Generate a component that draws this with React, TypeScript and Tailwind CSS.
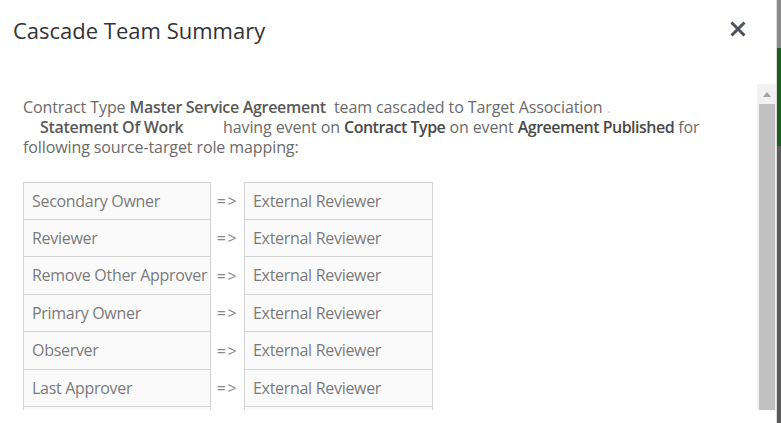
import React from "react";

const rows = [
  "Secondary Owner",
  "Reviewer",
  "Remove Other Approver",
  "Primary Owner",
  "Observer",
  "Last Approver",
  "",
];

const FONT = { fontFamily: '"Open Sans", "Noto Sans", sans-serif' };

function CloseIcon() {
  return (
    <svg width="16" height="16" viewBox="0 0 16 16" className="block">
      <path d="M1.5 1.5 L14.5 14.5 M14.5 1.5 L1.5 14.5" stroke="#4d5159" strokeWidth="3" />
    </svg>
  );
}

function Scrollbar() {
  return (
    <div className="w-[19px] flex flex-col bg-[#f1f1f1] pl-[2px] pr-[1px]">
      <div className="h-[20px] flex items-center justify-center">
        <svg width="8" height="5" viewBox="0 0 8 5" className="block">
          <path d="M0 5 L4 0 L8 5 Z" fill="#a3a3a3" />
        </svg>
      </div>
      <div className="flex-1 bg-[#c1c1c1]" />
    </div>
  );
}

export default function App() {
  return (
    <div className="w-[781px] h-[423px] flex overflow-hidden bg-white" style={FONT}>
      <div className="w-[777px] flex flex-col border-r border-[#dcdcdc]">
        <div className="h-[84px] flex items-start justify-between pl-[13px] pr-[30px] pt-[15px]">
          <h1 className="text-[22px] leading-[30px] text-[#333]">Cascade Team Summary</h1>
          <div className="pt-[6px]">
            <CloseIcon />
          </div>
        </div>

        <div className="h-[326px] flex">
          <div className="flex-1 overflow-hidden pl-[23px] pt-[13px]">
            <div className="text-[16px] leading-[20px] text-[#6b6b6b] tracking-[-0.1px] whitespace-nowrap">
              <div>
                Contract Type{" "}
                <b className="font-semibold text-[#595959] tracking-[-0.3px]">Master Service Agreement</b>
                {"\u00a0\u00a0"}team cascaded to Target Association <span className="text-[#d6d6d6]">.</span>
              </div>
              <div>
                <span className="inline-block w-[200px] pl-[17px]">
                  <b className="font-semibold text-[#595959] tracking-[-0.3px]">Statement Of Work</b>
                </span>
                having event on{" "}
                <span className="font-semibold text-[#4a4a4a] tracking-[-0.5px]">Contract Type</span> on event{" "}
                <span className="font-semibold text-[#4a4a4a] tracking-[-0.5px]">Agreement Published</span> for
              </div>
              <div>following source-target role mapping:</div>
            </div>

            <div className="mt-[25px] flex flex-col">
              {rows.map((r, i) => (
                <div key={i} className="flex h-[37.5px] text-[16px] tracking-[-0.3px]">
                  <div
                    className={
                      "w-[188px] border border-[#d3d3d3] bg-[#fafafa] pl-[8px] flex items-center overflow-hidden whitespace-nowrap text-[#7a7a7a] " +
                      (i > 0 ? "border-t-0" : "")
                    }
                  >
                    {r}
                  </div>
                  <div className="w-[33px] flex items-center justify-center text-[#8a8a8a] tracking-[1.5px]">
                    {r ? "=>" : ""}
                  </div>
                  <div
                    className={
                      "w-[189px] border border-[#d3d3d3] bg-[#fafafa] pl-[8px] flex items-center whitespace-nowrap text-[#7a7a7a] " +
                      (i > 0 ? "border-t-0" : "")
                    }
                  >
                    {r ? "External Reviewer" : ""}
                  </div>
                </div>
              ))}
            </div>
          </div>
          <Scrollbar />
        </div>
        <div className="flex-1 bg-white" />
      </div>

      <div className="w-[4px] flex flex-col">
        <div className="h-[48px] bg-[#8a8a8a]" />
        <div className="h-[98px] bg-[#1f5a1f]" />
        <div className="flex-1 bg-[#5c5c5c]" />
      </div>
    </div>
  );
}
